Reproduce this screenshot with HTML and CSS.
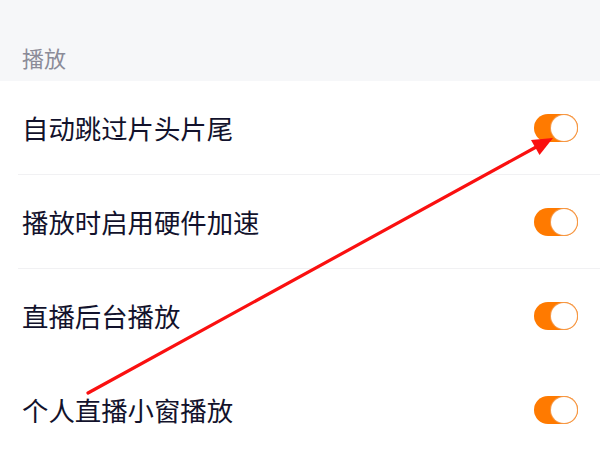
FILE: index.html
```html
<!DOCTYPE html>
<html lang="zh-CN">
<head>
    <meta charset="UTF-8">
    <meta name="viewport" content="width=device-width, initial-scale=1.0">
    <title>播放设置</title>
    <link rel="stylesheet" href="styles.css">
</head>
<body>
    <div class="page">
        <div class="section-title">播放</div>
        <div class="list">
            <div class="row">
                <span class="label">自动跳过片头片尾</span>
                <span class="toggle on"><span class="knob"></span></span>
            </div>
            <div class="row">
                <span class="label">播放时启用硬件加速</span>
                <span class="toggle on"><span class="knob"></span></span>
            </div>
            <div class="row no-line">
                <span class="label">直播后台播放</span>
                <span class="toggle on"><span class="knob"></span></span>
            </div>
            <div class="row">
                <span class="label">个人直播小窗播放</span>
                <span class="toggle on"><span class="knob"></span></span>
            </div>
        </div>

        <!-- annotation arrow drawn over the list -->
        <svg class="arrow" width="600" height="450" viewBox="0 0 600 450">
            <line x1="88" y1="393" x2="538" y2="146" stroke="#fa1010" stroke-width="3.2" stroke-linecap="round"/>
            <polygon points="553,138 539.5,155 531,140" fill="#fa1010"/>
        </svg>
    </div>
</body>
</html>
```

FILE: styles.css
```css
* {
    margin: 0;
    padding: 0;
    box-sizing: border-box;
}

body {
    font-family: "Noto Sans CJK SC", "Noto Sans", sans-serif;
    background: #fff;
    width: 600px;
    height: 450px;
    overflow: hidden;
}

.page {
    position: relative;
    width: 600px;
    height: 450px;
}

.section-title {
    height: 81px;
    background: #f6f7f9;
    color: #8b8b98;
    font-size: 22px;
    line-height: 28px;
    padding: 43px 0 0 22px;
}

.list {
    background: #fff;
}

.row {
    display: flex;
    align-items: center;
    justify-content: space-between;
    height: 94px;
    margin-left: 18px;
    padding: 0 22px 0 4px;
    border-bottom: 1px solid #f1f1f3;
}

.row.no-line {
    border-bottom-color: transparent;
}

.label {
    font-size: 26.4px;
    line-height: 32px;
    color: #12122c;
}

.toggle {
    display: flex;
    align-items: center;
    width: 44px;
    height: 28px;
    border-radius: 14px;
    background: #ddd;
    padding: 1px;
}

.toggle.on {
    background: #ff7a00;
    justify-content: flex-end;
}

.knob {
    width: 26px;
    height: 26px;
    border-radius: 50%;
    background: #fff;
    box-shadow: 0 0 0 1px #f59a4a;
}

.arrow {
    position: absolute;
    left: 0;
    top: 0;
    pointer-events: none;
}
```
